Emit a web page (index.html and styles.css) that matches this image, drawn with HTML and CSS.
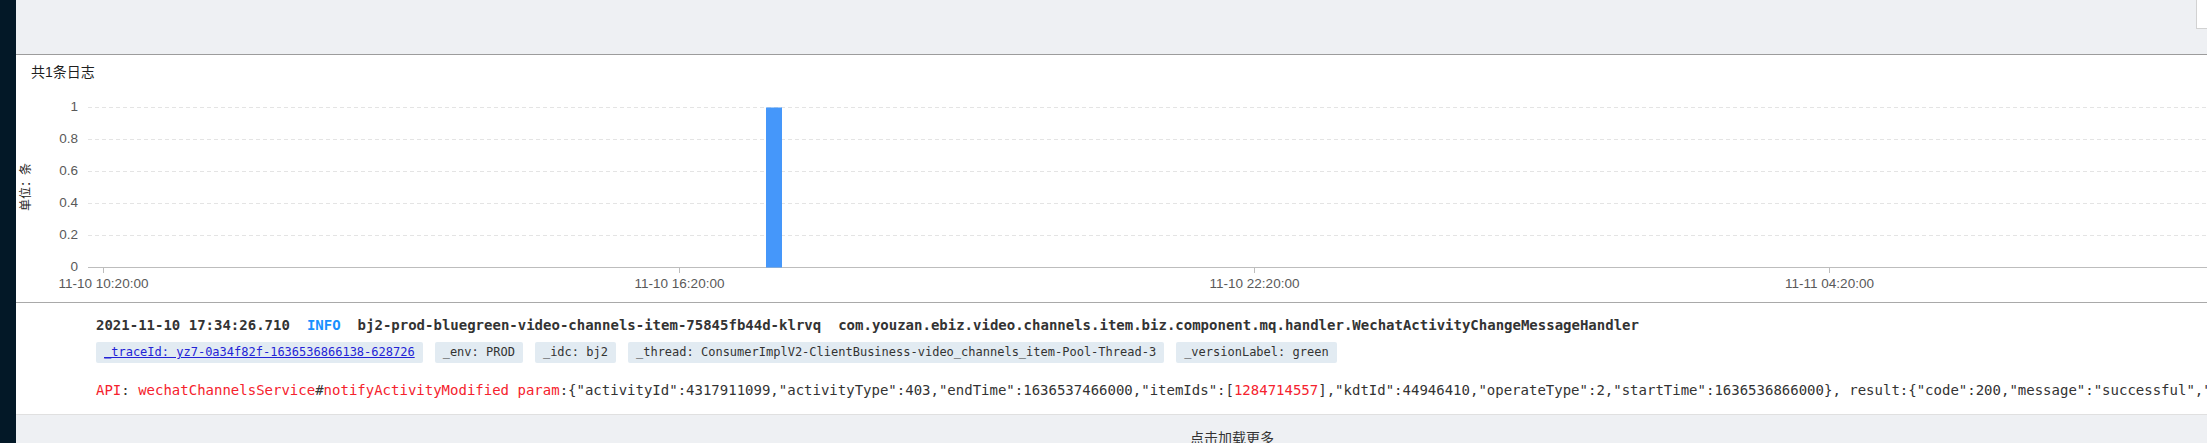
FILE: index.html
```html
<!DOCTYPE html>
<html lang="zh-CN">
<head>
<meta charset="utf-8">
<title>日志</title>
<link rel="stylesheet" href="styles.css">
</head>
<body>
<div class="app">
  <aside class="sidebar"></aside>
  <main class="main">
    <div class="topbar"><div class="topbox"></div></div>
    <div class="content">
      <section class="panel">
        <div class="panel-title">共1条日志</div>
        <svg class="chart" width="2432" height="220" viewBox="0 0 2432 220">
          <g class="grid">
            <line x1="72" y1="25.5" x2="2432" y2="25.5"/>
            <line x1="72" y1="57.5" x2="2432" y2="57.5"/>
            <line x1="72" y1="89.5" x2="2432" y2="89.5"/>
            <line x1="72" y1="121.5" x2="2432" y2="121.5"/>
            <line x1="72" y1="153.5" x2="2432" y2="153.5"/>
          </g>
          <line class="axis" x1="72" y1="185.5" x2="2432" y2="185.5"/>
          <g class="ticks">
            <line x1="87.5" y1="186" x2="87.5" y2="191"/>
            <line x1="663.5" y1="186" x2="663.5" y2="191"/>
            <line x1="1238.5" y1="186" x2="1238.5" y2="191"/>
            <line x1="1813.5" y1="186" x2="1813.5" y2="191"/>
          </g>
          <rect class="bar" x="750" y="25.5" width="16" height="160"/>
          <g class="ylabels">
            <text x="62" y="25.5">1</text>
            <text x="62" y="57.5">0.8</text>
            <text x="62" y="89.5">0.6</text>
            <text x="62" y="121.5">0.4</text>
            <text x="62" y="153.5">0.2</text>
            <text x="62" y="185.5">0</text>
          </g>
          <g class="xlabels">
            <text x="87.5" y="202">11-10 10:20:00</text>
            <text x="663.5" y="202">11-10 16:20:00</text>
            <text x="1238.5" y="202">11-10 22:20:00</text>
            <text x="1813.5" y="202">11-11 04:20:00</text>
          </g>
          <text class="ytitle" transform="translate(11,105) rotate(-90)">单位：条</text>
        </svg>
      </section>
      <div class="log-item">
        <div class="log-head">
          <span>2021-11-10 17:34:26.710</span>
          <span class="level">INFO</span>
          <span>bj2-prod-bluegreen-video-channels-item-75845fb44d-klrvq</span>
          <span>com.youzan.ebiz.video.channels.item.biz.component.mq.handler.WechatActivityChangeMessageHandler</span>
        </div>
        <div class="tags">
          <a class="tag tag-link" href="#">_traceId: yz7-0a34f82f-1636536866138-628726</a>
          <span class="tag">_env: PROD</span>
          <span class="tag">_idc: bj2</span>
          <span class="tag">_thread: ConsumerImplV2-ClientBusiness-video_channels_item-Pool-Thread-3</span>
          <span class="tag">_versionLabel: green</span>
        </div>
        <div class="msg"><span class="red">API</span>: <span class="red">wechatChannelsService</span>#<span class="red">notifyActivityModified</span> <span class="red">param</span>:{"activityId":4317911099,"activityType":403,"endTime":1636537466000,"itemIds":[<span class="red">1284714557</span>],"kdtId":44946410,"operateType":2,"startTime":1636536866000}, result:{"code":200,"message":"successful","success":true}</div>
      </div>
      <div class="load-more">点击加载更多</div>
    </div>
  </main>
</div>
</body>
</html>
```

FILE: styles.css
```css
html, body {
  margin: 0;
  padding: 0;
  height: 100%;
  overflow: hidden;
}

body {
  font-family: "Liberation Sans", "Noto Sans CJK SC", sans-serif;
  color: #262626;
  background: #eef0f3;
}

.app {
  display: flex;
  height: 100vh;
  overflow: hidden;
}

.sidebar {
  flex: none;
  width: 16px;
  background: #031827;
}

.main {
  flex: 1;
  min-width: 0;
  overflow: hidden;
  background: #eef0f3;
}

.topbar {
  height: 54px;
  background: #eef0f3;
  border-bottom: 1px solid #9c9c9c;
  display: flex;
  justify-content: flex-end;
  align-items: flex-start;
}

.topbox {
  width: 10px;
  height: 28px;
  background: #fff;
  border-left: 1px solid #d2d2d2;
  border-bottom: 1px solid #d2d2d2;
}

.content {
  width: 2432px;
}

.panel {
  background: #fff;
  border-bottom: 1px solid #a9a9a9;
}

.panel-title {
  padding: 7px 15px 0;
  font-size: 14px;
  line-height: 20px;
  color: #1f1f1f;
}

.chart {
  display: block;
  font-family: "Liberation Sans", "Noto Sans CJK SC", sans-serif;
}

.grid line {
  stroke: #e4e4e4;
  stroke-width: 1;
  stroke-dasharray: 4 3;
}

.axis {
  stroke: #bdbdbd;
  stroke-width: 1;
}

.ticks line {
  stroke: #bdbdbd;
  stroke-width: 1;
}

.bar {
  fill: #4597fa;
}

.ylabels text {
  font-size: 13.5px;
  fill: #595959;
  text-anchor: end;
  dominant-baseline: middle;
}

.xlabels text {
  font-size: 13.5px;
  fill: #595959;
  text-anchor: middle;
  dominant-baseline: middle;
}

.ytitle {
  font-size: 12px;
  fill: #262626;
  text-anchor: middle;
  dominant-baseline: middle;
}

.log-item {
  background: #fff;
  padding: 12px 0 14px 80px;
  font-family: "DejaVu Sans Mono", "Liberation Mono", monospace;
  font-size: 14px;
  color: #333;
}

.log-head {
  display: flex;
  gap: 17px;
  font-weight: bold;
  line-height: 20px;
  white-space: nowrap;
}

.level {
  color: #1890ff;
}

.tags {
  display: flex;
  gap: 12px;
  margin-top: 7px;
}

.tag {
  font-size: 12px;
  line-height: 15px;
  padding: 3px 8px;
  background: #e2ebf2;
  border-radius: 2px;
  white-space: nowrap;
  color: #333;
}

.tag-link {
  color: #2323d6;
  text-decoration: underline;
}

.msg {
  margin-top: 17px;
  line-height: 20px;
  white-space: nowrap;
}

.red {
  color: #f5222d;
}

.load-more {
  border-top: 1px solid #e0e0e0;
  background: #eef0f3;
  text-align: center;
  font-size: 14px;
  line-height: 20px;
  padding-top: 13px;
  height: 60px;
  color: #333;
}
```
